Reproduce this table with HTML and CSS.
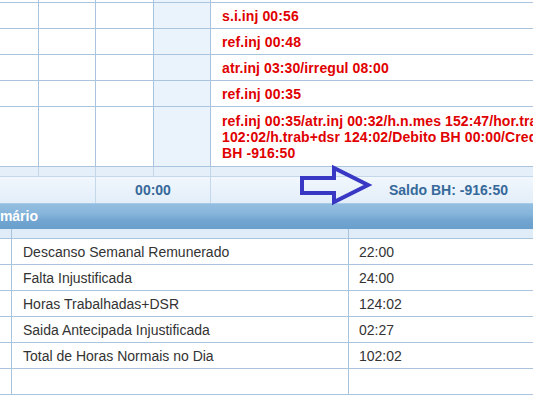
FILE: index.html
```html
<!DOCTYPE html>
<html lang="pt">
<head>
<meta charset="utf-8">
<title>Espelho de ponto</title>
<link rel="stylesheet" href="styles.css">
</head>
<body>
<div class="page">
  <div class="days">
    <div class="row row-stub">
      <div class="cell c0"></div><div class="cell c1"></div><div class="cell c2"></div><div class="cell c3"></div><div class="cell c4"></div>
    </div>
    <div class="row">
      <div class="cell c0"></div><div class="cell c1"></div><div class="cell c2"></div><div class="cell c3"></div><div class="cell c4 obs">s.i.inj 00:56</div>
    </div>
    <div class="row">
      <div class="cell c0"></div><div class="cell c1"></div><div class="cell c2"></div><div class="cell c3"></div><div class="cell c4 obs">ref.inj 00:48</div>
    </div>
    <div class="row">
      <div class="cell c0"></div><div class="cell c1"></div><div class="cell c2"></div><div class="cell c3"></div><div class="cell c4 obs">atr.inj 03:30/irregul 08:00</div>
    </div>
    <div class="row">
      <div class="cell c0"></div><div class="cell c1"></div><div class="cell c2"></div><div class="cell c3"></div><div class="cell c4 obs">ref.inj 00:35</div>
    </div>
    <div class="row row-tall">
      <div class="cell c0"></div><div class="cell c1"></div><div class="cell c2"></div><div class="cell c3"></div><div class="cell c4 obs">ref.inj 00:35/atr.inj 00:32/h.n.mes 152:47/hor.trab<br>102:02/h.trab+dsr 124:02/Debito BH 00:00/Credito<br>BH -916:50</div>
    </div>
    <div class="row row-strip">
      <div class="cell c0"></div><div class="cell c1"></div><div class="cell c2"></div><div class="cell c3"></div><div class="cell c4"></div>
    </div>
    <div class="row row-total">
      <div class="cell t0"></div>
      <div class="cell t1">00:00</div>
      <div class="cell t2">
        <svg class="arrow" width="76" height="43" viewBox="0 0 76 43" aria-hidden="true">
          <polygon points="4,15 36,15 36,5 70,22 36,39 36,30 4,30" fill="none" stroke="#3838c4" stroke-width="4" stroke-linejoin="miter"/>
        </svg>
        <span class="saldo">Saldo BH: -916:50</span>
      </div>
    </div>
  </div>

  <div class="panel">
    <div class="panel-head">Sumário</div>
    <div class="row sub-head">
      <div class="cell s0"></div><div class="cell s1"></div><div class="cell s2"></div>
    </div>
    <div class="row">
      <div class="cell s0"></div><div class="cell s1">Descanso Semanal Remunerado</div><div class="cell s2">22:00</div>
    </div>
    <div class="row">
      <div class="cell s0"></div><div class="cell s1">Falta Injustificada</div><div class="cell s2">24:00</div>
    </div>
    <div class="row">
      <div class="cell s0"></div><div class="cell s1">Horas Trabalhadas+DSR</div><div class="cell s2">124:02</div>
    </div>
    <div class="row">
      <div class="cell s0"></div><div class="cell s1">Saida Antecipada Injustificada</div><div class="cell s2">02:27</div>
    </div>
    <div class="row">
      <div class="cell s0"></div><div class="cell s1">Total de Horas Normais no Dia</div><div class="cell s2">102:02</div>
    </div>
    <div class="row">
      <div class="cell s0"></div><div class="cell s1"></div><div class="cell s2"></div>
    </div>
  </div>
</div>
</body>
</html>
```

FILE: styles.css
```css
html, body {
  margin: 0;
  padding: 0;
  background: #ffffff;
  overflow: hidden;
}

body {
  font-family: "Liberation Sans", Arial, sans-serif;
  font-size: 14px;
  color: #333333;
}

.page {
  width: 900px;
}

.row {
  display: flex;
  height: 26px;
  box-sizing: border-box;
  border-bottom: 1px solid #a9c4dc;
}

.cell {
  box-sizing: border-box;
  border-right: 1px solid #a9c4dc;
  display: flex;
  align-items: center;
  white-space: nowrap;
}

/* day table columns */
.c0 { width: 39px; }
.c1 { width: 57px; }
.c2 { width: 58px; }
.c3 { width: 57px; background: #eaf3fc; }
.c4 { flex: 1; padding-left: 11px; border-right: none; }

.obs {
  color: #e00000;
  font-weight: bold;
  line-height: 16px;
  letter-spacing: 0.1px;
}

.row-stub { height: 3px; }
.row-tall { height: 60px; }

.row-strip {
  height: 10px;
  background: #e5eff9;
  border-bottom-color: #c4d8ea;
}
.row-strip .cell { border-right-color: #c4d8ea; }
.row-strip .c3 { background: #e5eff9; }

.row-total {
  border-bottom: none;
  background: linear-gradient(#f1f7fd, #e3eef9);
  font-weight: bold;
  color: #36699a;
}
.row-total .cell { border-right-color: #c4d8ea; }

.t0 { width: 96px; }
.t1 { width: 115px; justify-content: center; }
.t2 { flex: 1; border-right: none; position: relative; padding-left: 178px; }

.arrow {
  position: absolute;
  left: 87px;
  top: -14px;
}

/* summary panel */
.panel-head {
  height: 26px;
  background: linear-gradient(#93bee0 0%, #86b5db 40%, #73a6d1 62%, #6a9fcc 100%);
  border-top: 1px solid #a6cbe8;
  box-sizing: border-box;
  color: #ffffff;
  font-weight: bold;
  line-height: 25px;
  text-indent: -18px;
  overflow: hidden;
  white-space: nowrap;
}

.sub-head {
  height: 10px;
  background: #e0ecf8;
}

.s0 { width: 12px; }
.s1 { width: 337px; padding-left: 11px; }
.s2 { flex: 1; padding-left: 10px; border-right: none; }
```
